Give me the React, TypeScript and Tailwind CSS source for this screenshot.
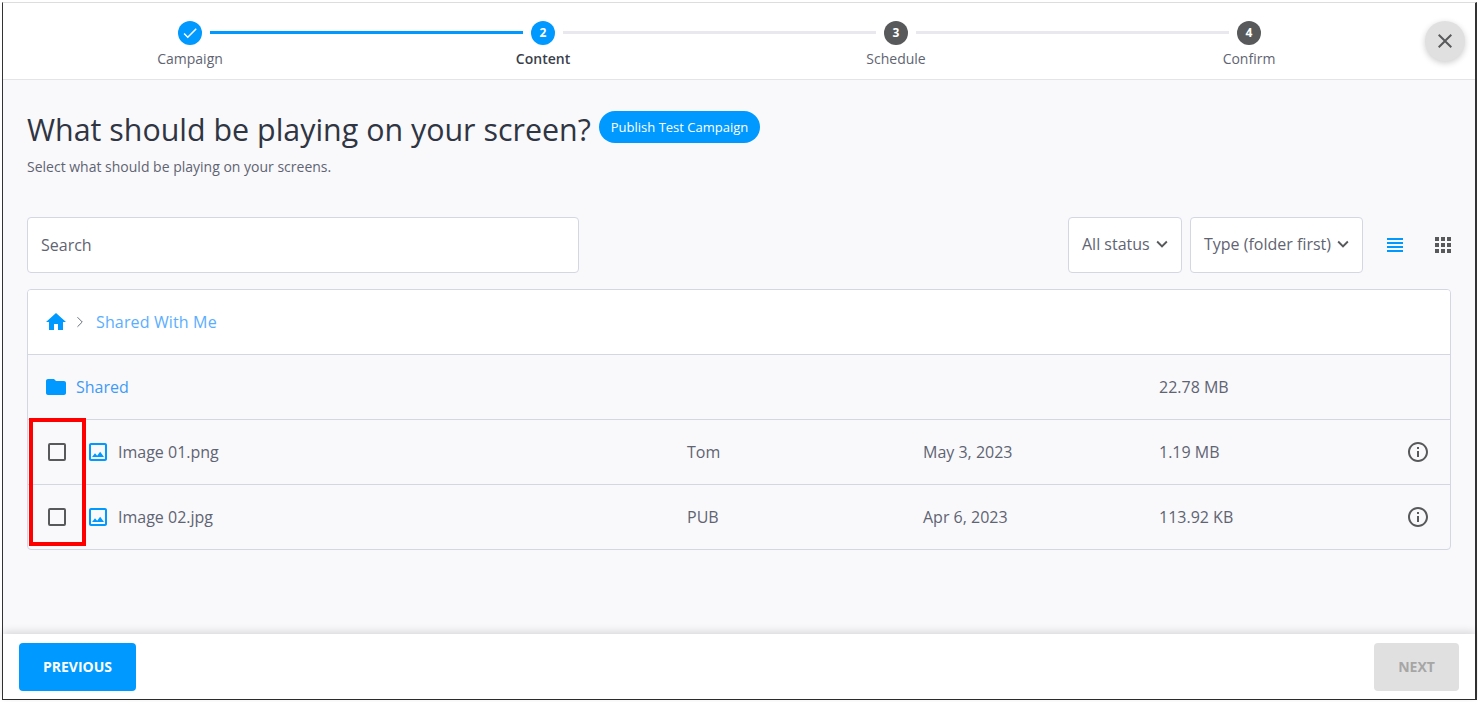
import { ChevronRight } from 'lucide-react';
import { MdApps, MdCheck, MdClose, MdExpandMore, MdFolder, MdHome, MdInfoOutline, MdOutlineImage, MdViewHeadline } from 'react-icons/md';

const steps = [
    { label: 'Campaign', done: true },
    { label: 'Content', active: true },
    { label: 'Schedule' },
    { label: 'Confirm' },
];

const files = [
    { name: 'Image 01.png', owner: 'Tom', date: 'May 3, 2023', size: '1.19 MB' },
    { name: 'Image 02.jpg', owner: 'PUB', date: 'Apr 6, 2023', size: '113.92 KB' },
];

const Stepper = () => (
    <div className="flex items-start pl-[175px] pr-[214px] pt-[18px]">
        {steps.map((step, idx) => {
            const lit = step.done || step.active;
            return (
                <div key={step.label} className={idx < 3 ? 'flex flex-1 items-start' : 'flex items-start'}>
                    <div className="flex w-6 flex-col items-center">
                        <div className={`flex h-6 w-6 items-center justify-center rounded-full text-[12px] font-bold text-white ${lit ? 'bg-[#0099ff]' : 'bg-[#58595b]'}`}>
                            {step.done ? <MdCheck size={18} /> : idx + 1}
                        </div>
                        <span className={`mt-1 w-max text-[14px] leading-[20px] ${step.active ? 'font-semibold text-[#3a3f4b]' : 'text-[#5f6472]'}`}>
                            {step.label}
                        </span>
                    </div>
                    {idx < 3 && (
                        <div className={`mx-2 mt-[10px] h-[3px] flex-1 ${step.done ? 'bg-[#0099ff]' : 'bg-[#e8e8ee]'}`} />
                    )}
                </div>
            );
        })}
    </div>
);

const Select = ({ label, className }: { label: string; className: string }) => (
    <div className={`flex h-[56px] items-center justify-between rounded-[4px] border border-[#d3d7e3] bg-white pb-[2px] pl-[13px] pr-[8px] text-[16px] text-[#5f6472] ${className}`}>
        <span>{label}</span>
        <MdExpandMore size={22} className="text-[#58595b]" />
    </div>
);

export default function App() {
    return (
        <div className="relative h-[702px] w-[1478px] overflow-hidden bg-white pb-[2px] pl-[2px] pr-[1px] pt-[2px] font-['Open_Sans',sans-serif]">
            <div className="flex h-full flex-col border-b border-l border-r-2 border-t border-b-[#2d2d2d] border-l-[#333333] border-r-[#333333] border-t-[#dddddd]">
                <header className="h-[77px] shrink-0 border-b border-[#e4e4e8] bg-white">
                    <Stepper />
                </header>

                <main className="flex-1 bg-[#f9f9fc] pl-[24px] pr-[23px]">
                    <div className="flex items-start pt-[31px]">
                        <h1 className="text-[30.4px] leading-[37px] text-[#2f3542]">What should be playing on your screen?</h1>
                        <button className="ml-2 h-8 rounded-full bg-[#0099ff] px-3 pt-[2px] text-[13px] font-medium text-white">Publish Test Campaign</button>
                    </div>
                    <p className="mt-[9px] text-[14px] leading-[20px] text-[#5f6472]">Select what should be playing on your screens.</p>

                    <div className="mt-10 flex items-center">
                        <div className="flex h-[56px] w-[552px] items-center rounded-[4px] border border-[#d3d7e3] bg-white pl-[13px] text-[16px] text-[#5f6472]">Search</div>
                        <div className="ml-auto flex items-center">
                            <Select label="All status" className="w-[114px]" />
                            <Select label="Type (folder first)" className="ml-2 w-[173px]" />
                            <MdViewHeadline size={24} className="ml-[20px] text-[#0099ff]" />
                            <MdApps size={24} className="ml-[24px] mr-[-3px] text-[#58595b]" />
                        </div>
                    </div>

                    <div className="mt-4 w-[1424px] overflow-hidden rounded-[4px] border border-[#d3d7e3]">
                        <div className="flex h-[64px] items-center bg-white pl-4 text-[16px] text-[#5aaeff]">
                            <MdHome size={24} className="text-[#0099ff]" />
                            <ChevronRight size={18} strokeWidth={1.25} className="ml-[3px] text-[#5f6472]" />
                            <span className="ml-[7px] tracking-[0.14px]">Shared With Me</span>
                        </div>
                        <div className="grid h-[65px] grid-cols-[659px_236px_236px_1fr] items-center border-t border-[#d3d7e3] text-[16px] text-[#5f6472]">
                            <div className="flex items-center pl-4 text-[#3f9bf5]">
                                <MdFolder size={24} className="text-[#0099ff]" />
                                <span className="ml-2">Shared</span>
                            </div>
                            <span />
                            <span />
                            <span>22.78 MB</span>
                        </div>
                        {files.map((file) => (
                            <div key={file.name} className="grid h-[65px] grid-cols-[659px_236px_236px_1fr] items-center border-t border-[#d3d7e3] text-[16px] text-[#5f6472]">
                                <div className="flex items-center pl-5">
                                    <div className="h-[18px] w-[18px] rounded-[2px] border-2 border-[#58595b]" />
                                    <MdOutlineImage size={24} className="ml-5 text-[#0099ff]" />
                                    <span className="ml-2">{file.name}</span>
                                </div>
                                <span>{file.owner}</span>
                                <span>{file.date}</span>
                                <div className="flex items-center justify-between pr-5">
                                    <span>{file.size}</span>
                                    <MdInfoOutline size={24} className="text-[#58595b]" />
                                </div>
                            </div>
                        ))}
                    </div>
                </main>

                <footer className="flex h-[65px] shrink-0 items-center justify-between bg-white px-4 shadow-[0_-2px_8px_rgba(0,0,0,0.14)]">
                    <button className="h-12 w-[117px] rounded-[4px] bg-[#0099ff] text-[14px] font-bold text-white">PREVIOUS</button>
                    <button className="h-12 w-[85px] rounded-[4px] bg-[#e0e0e0] text-[14px] font-bold text-[#a6a6a6]">NEXT</button>
                </footer>
            </div>

            <button className="absolute left-[1425px] top-[21px] flex h-10 w-10 items-center justify-center rounded-full bg-[#e0e0e0] text-[#58595b] shadow-[0_2px_6px_rgba(0,0,0,0.2)]">
                <MdClose size={24} />
            </button>
            <div className="absolute left-[29px] top-[418px] h-[128px] w-[57px] border-4 border-[#ff0000]" />
        </div>
    );
}
